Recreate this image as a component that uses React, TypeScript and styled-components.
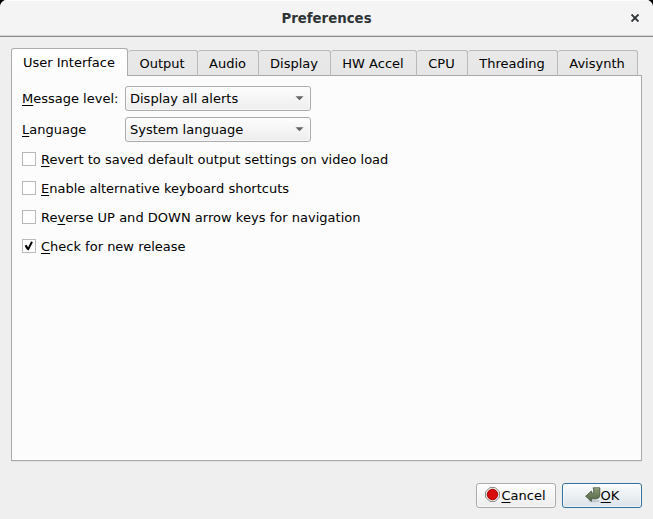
import React from "react";
import styled, { createGlobalStyle } from "styled-components";

const GlobalStyle = createGlobalStyle`
  * { box-sizing: border-box; }
  body { margin: 0; background: #000; }
`;

const Dialog = styled.div`
  width: 653px;
  height: 519px;
  display: flex;
  flex-direction: column;
  background: #efefef;
  border-radius: 7px 7px 0 0;
  overflow: hidden;
  font: 13px/16px "DejaVu Sans", sans-serif;
  color: #000;
  white-space: nowrap;
`;

const TitleBar = styled.header`
  height: 37px;
  flex: none;
  display: grid;
  grid-template-columns: 36px 1fr 36px;
  align-items: center;
  padding-bottom: 1px;
  background: #f4f4f4;
  border-top: 1px solid #fbfbfb;
  border-bottom: 1px solid #8b8e88;
  box-shadow: inset 0 -1px #d4d5d3;
`;

const Title = styled.h1`
  grid-column: 2;
  margin: 0;
  padding-top: 2px;
  font-size: 13.33px;
  line-height: 16px;
  text-align: center;
  color: #2e3436;
`;

const CloseButton = styled.button`
  display: flex;
  justify-content: center;
  padding: 0;
  border: 0;
  background: none;
`;

const TabBar = styled.nav`
  display: flex;
  align-items: flex-end;
  height: 28px;
  margin: 11px 11px -1px;
  flex: none;
  position: relative;
`;

const Tab = styled.div<{ $width: number; $active?: boolean }>`
  width: ${(p) => p.$width}px;
  height: ${(p) => (p.$active ? 28 : 26)}px;
  padding-top: ${(p) => (p.$active ? 6 : 5)}px;
  padding-right: 1px;
  text-align: center;
  border: 1px solid ${(p) => (p.$active ? "#acacac" : "#b9b9b9")};
  border-left-width: ${(p) => (p.$active ? 1 : 0)}px;
  border-bottom: ${(p) => (p.$active ? "0" : "1px solid #a9a9a9")};
  border-radius: 3px 3px 0 0;
  background: ${(p) => (p.$active ? "linear-gradient(#fff, #fcfcfc)" : "linear-gradient(#e9e9e9, #e6e6e6)")};
`;

const Panel = styled.main`
  width: 631px;
  height: 386px;
  margin-left: 11px;
  padding: 10px;
  border: 1px solid #a9a9a9;
  background: #fcfcfc;
  box-shadow: 0 1px #e3e3e3;
`;

const FieldRow = styled.div`
  display: grid;
  grid-template-columns: 103px 186px;
  align-items: center;
  height: 25px;
  margin-bottom: 6px;
`;

const ComboBox = styled.div`
  height: 25px;
  display: flex;
  align-items: center;
  justify-content: space-between;
  padding: 0 6px 0 4px;
  border: 1px solid #ababab;
  border-radius: 3px;
  background: linear-gradient(#fdfdfd, #ededed);
  box-shadow: inset 0 0 0 1px rgba(255, 255, 255, 0.6);
`;

const Options = styled.div`
  display: flex;
  flex-direction: column;
  gap: 13px;
  padding-top: 4px;
`;

const Option = styled.label`
  display: flex;
  align-items: flex-start;
  height: 16px;
  gap: 5px;
`;

const OptionText = styled.span<{ $tracking?: number }>`
  letter-spacing: ${(p) => p.$tracking ?? 0}px;
`;

const CheckSquare = styled.span`
  width: 14px;
  height: 14px;
  display: flex;
  border: 1px solid #b9b9b9;
  background: #fff;
`;

const Mnemonic = styled.span`
  text-decoration: underline;
  text-decoration-thickness: 1px;
  text-underline-offset: 2px;
  text-decoration-skip-ink: none;
`;

const Footer = styled.footer`
  display: flex;
  justify-content: flex-end;
  gap: 6px;
  padding: 22px 11px 0;
`;

const PushButton = styled.button<{ $primary?: boolean }>`
  width: 80px;
  height: 25px;
  display: flex;
  align-items: center;
  justify-content: center;
  padding: 0 ${(p) => (p.$primary ? 0 : 1)}px 0 0;
  font: inherit;
  color: #000;
  border: 1px solid ${(p) => (p.$primary ? "#2f709f" : "#ababab")};
  border-radius: 3px;
  background: ${(p) => (p.$primary ? "linear-gradient(#fbfcfd, #dbe3e9)" : "linear-gradient(#fdfdfd, #ededed)")};
  box-shadow: inset 0 0 0 1px rgba(255, 255, 255, 0.6);

  svg {
    margin-bottom: 2px;
  }
`;

const Arrow = () => (
  <svg width="9" height="5" viewBox="0 0 9 5">
    <path d="M0.5 0.2H8.5L4.5 4.3Z" fill="#646464" />
  </svg>
);

const Tick = () => (
  <svg width="12" height="12" viewBox="0 0 12 12">
    <path d="M2.6 5.3L4.8 9" fill="none" stroke="#000" strokeWidth="2.2" />
    <path d="M4.8 10L9 1.8" fill="none" stroke="#000" strokeWidth="1.9" />
  </svg>
);

const StopIcon = () => (
  <svg width="16" height="16" viewBox="0 0 16 16">
    <path d="M4.8 .6H10.2L14.4 4.8V10.2L10.2 14.4H4.8L.6 10.2V4.8Z" fill="#eeeeec" stroke="#85877f" />
    <circle cx="7.5" cy="7.5" r="5.2" fill="#d80c0c" stroke="#a80000" />
  </svg>
);

const ReturnIcon = () => (
  <svg width="16" height="16" viewBox="0 0 16 16">
    <defs>
      <linearGradient id="leaf" x2="0" y2="1">
        <stop stopColor="#899a75" />
        <stop offset="1" stopColor="#536446" />
      </linearGradient>
    </defs>
    <ellipse cx="9" cy="14" rx="6" ry="1.5" fill="#000" opacity=".14" />
    <path d="M8.2 .8H14.8V8Q14.8 11.8 10.8 11.8H6.4V14.3L.6 9.3L6.4 4V6H7.6Q8.6 6 8.6 5V2.4Z" fill="url(#leaf)" stroke="#43523a" strokeWidth=".8" />
    <path d="M10 1.8H13.8" stroke="#a3b08f" strokeWidth=".8" />
  </svg>
);

const tabs: [string, number][] = [
  ["User Interface", 117],
  ["Output", 70],
  ["Audio", 61],
  ["Display", 72],
  ["HW Accel", 86],
  ["CPU", 51],
  ["Threading", 90],
  ["Avisynth", 80],
];

const fields = [
  { key: "M", rest: "essage level:", value: "Display all alerts" },
  { key: "L", rest: "anguage", value: "System language" },
];

const options = [
  { before: "", key: "R", rest: "evert to saved default output settings on video load", checked: false },
  { before: "", key: "E", rest: "nable alternative keyboard shortcuts", checked: false },
  { before: "Re", key: "v", rest: "erse UP and DOWN arrow keys for navigation", checked: false, tracking: 0.022 },
  { before: "", key: "C", rest: "heck for new release", checked: true },
];

export default function App() {
  return (
    <>
      <GlobalStyle />
      <Dialog>
        <TitleBar>
          <Title>Preferences</Title>
          <CloseButton aria-label="Close">
            <svg width="8" height="8" viewBox="0 0 8 8">
              <path d="M.5 .5L7.5 7.5M7.5 .5L.5 7.5" stroke="#2e3436" strokeWidth="1.9" />
            </svg>
          </CloseButton>
        </TitleBar>
        <TabBar>
          {tabs.map(([name, width], i) => (
            <Tab key={name} $width={width} $active={i === 0}>{name}</Tab>
          ))}
        </TabBar>
        <Panel>
          {fields.map((f) => (
            <FieldRow key={f.value}>
              <span><Mnemonic>{f.key}</Mnemonic>{f.rest}</span>
              <ComboBox>{f.value}<Arrow /></ComboBox>
            </FieldRow>
          ))}
          <Options>
            {options.map((o) => (
              <Option key={o.rest}>
                <CheckSquare>{o.checked && <Tick />}</CheckSquare>
                <OptionText $tracking={o.tracking}>{o.before}<Mnemonic>{o.key}</Mnemonic>{o.rest}</OptionText>
              </Option>
            ))}
          </Options>
        </Panel>
        <Footer>
          <PushButton><StopIcon /><span><Mnemonic>C</Mnemonic>ancel</span></PushButton>
          <PushButton $primary><ReturnIcon /><span><Mnemonic>O</Mnemonic>K</span></PushButton>
        </Footer>
      </Dialog>
    </>
  );
}
